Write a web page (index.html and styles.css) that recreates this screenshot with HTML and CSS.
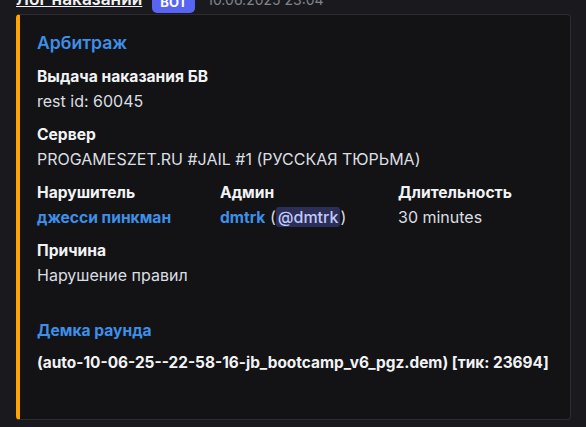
FILE: index.html
```
<!DOCTYPE html>
<html>
<head>
<meta charset="utf-8">
<link rel="stylesheet" href="styles.css">
</head>
<body>
<div class="message">
  <div class="header">
    <span class="author">Лог наказаний</span>
    <span class="badge">BOT</span>
    <span class="time">10.06.2025 23:04</span>
  </div>
  <div class="embed">
    <div class="title">Арбитраж</div>
    <div class="field">
      <div class="fname">Выдача наказания БВ</div>
      <div class="fvalue">rest id: 60045</div>
    </div>
    <div class="field">
      <div class="fname">Сервер</div>
      <div class="fvalue">PROGAMESZET.RU #JAIL #1 (РУССКАЯ ТЮРЬМА)</div>
    </div>
    <div class="inline-row">
      <div class="field">
        <div class="fname">Нарушитель</div>
        <div class="fvalue"><span class="link">джесси пинкман</span></div>
      </div>
      <div class="field">
        <div class="fname">Админ</div>
        <div class="fvalue"><span class="link">dmtrk</span> (<span class="mention">@dmtrk</span>)</div>
      </div>
      <div class="field">
        <div class="fname">Длительность</div>
        <div class="fvalue">30 minutes</div>
      </div>
    </div>
    <div class="field">
      <div class="fname">Причина</div>
      <div class="fvalue">Нарушение правил</div>
    </div>
    <div class="field demo">
      <div class="fname link">Демка раунда</div>
      <div class="fvalue strong">(auto-10-06-25--22-58-16-jb_bootcamp_v6_pgz.dem) [тик: 23694]</div>
    </div>
  </div>
</div>
</body>
</html>
```
FILE: styles.css
```
html, body {
  margin: 0;
  padding: 0;
  background: #1a1a1e;
  overflow: hidden;
  font-family: Inter, "Noto Sans", sans-serif;
  color: #dbdee1;
}
.message {
  padding: 0 15px 0 16px;
}
.header {
  margin-top: -12px;
  height: 22px;
  display: flex;
  align-items: baseline;
  white-space: nowrap;
  margin-bottom: 4px;
}
.author {
  font-size: 17.3px;
  line-height: 22px;
  font-weight: 600;
  color: #f2f3f5;
  text-decoration: underline;
}
.badge {
  margin-left: 10px;
  background: #5865f2;
  color: #fff;
  font-size: 13px;
  font-weight: 700;
  padding: 2px 8px 3px;
  border-radius: 5px;
  line-height: 15px;
  transform: translateY(2px);
}
.time {
  margin-left: 12px;
  font-size: 14px;
  color: #80848e;
}
.embed {
  height: 406px;
  box-sizing: border-box;
  background: #131316;
  border: 1px solid #2c2c31;
  border-left: 4px solid #ffa500;
  border-radius: 4px;
  padding: 16px 16px 45px 17px;
}
.title {
  font-size: 17.6px;
  line-height: 24px;
  font-weight: 600;
  color: #3d8fe8;
  margin-bottom: 10px;
}
.field {
  font-size: 15.6px;
  line-height: 23px;
  margin-bottom: 10px;
}
.fname {
  font-weight: 700;
  color: #f2f3f5;
}
.fvalue {
  color: #dbdee1;
  font-size: 16px;
  margin-top: 2px;
}
.link {
  color: #3d8fe8;
  font-weight: 700;
}
.fvalue .link {
  font-size: 15.6px;
}
.strong {
  font-weight: 700;
  color: #f2f3f5;
  font-size: 15.4px;
}
.mention {
  background: #2b2f58;
  color: #c2c9fb;
  border-radius: 3px;
  padding: 0 2px;
  font-weight: 500;
}
.inline-row {
  display: grid;
  grid-template-columns: 183px 178px auto;
}
.demo {
  margin-top: 32px;
}
.demo .fname {
  margin-bottom: 9px;
}
.demo .fvalue {
  margin-top: 0;
}
```
